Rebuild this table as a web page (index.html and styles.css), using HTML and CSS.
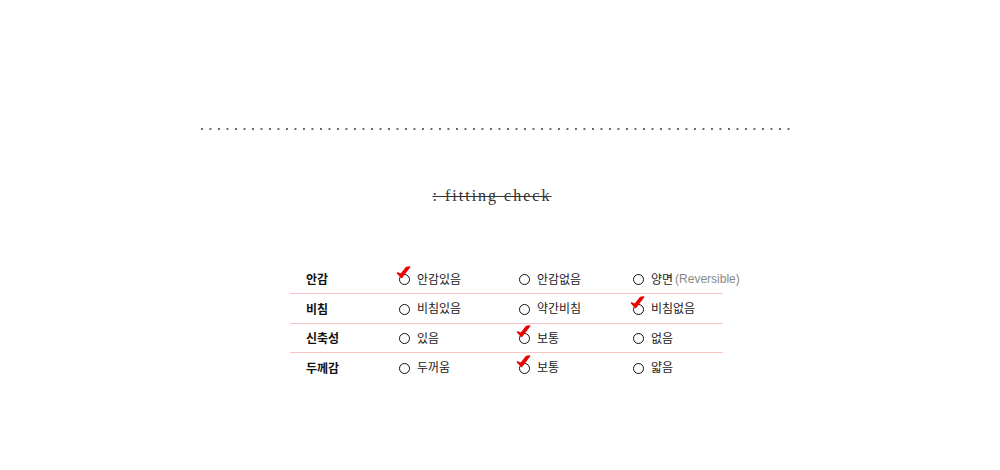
FILE: index.html
```html
<!DOCTYPE html>
<html lang="ko">
<head>
  <meta charset="UTF-8" />
  <title>fitting check</title>
  <link rel="stylesheet" href="styles.css">
</head>
<body>
  <div class="page">
    <div class="dots"></div>

    <h2 class="title">: fitting check</h2>

    <div class="fit">
      <div class="row">
        <div class="label">안감</div>
        <div class="opt"><span class="radio on"></span>안감있음</div>
        <div class="opt"><span class="radio"></span>안감없음</div>
        <div class="opt"><span class="radio"></span>양면 <em>(Reversible)</em></div>
      </div>
      <div class="row">
        <div class="label">비침</div>
        <div class="opt"><span class="radio"></span>비침있음</div>
        <div class="opt"><span class="radio"></span>약간비침</div>
        <div class="opt"><span class="radio on"></span>비침없음</div>
      </div>
      <div class="row">
        <div class="label">신축성</div>
        <div class="opt"><span class="radio"></span>있음</div>
        <div class="opt"><span class="radio on"></span>보통</div>
        <div class="opt"><span class="radio"></span>없음</div>
      </div>
      <div class="row">
        <div class="label">두께감</div>
        <div class="opt"><span class="radio"></span>두꺼움</div>
        <div class="opt"><span class="radio on"></span>보통</div>
        <div class="opt"><span class="radio"></span>얇음</div>
      </div>
    </div>
  </div>

  <script>
    // 체크 표시 그리기
    document.querySelectorAll('.radio.on').forEach(r => {
      r.innerHTML = '<svg class="tick" width="16" height="16" viewBox="0 0 16 16">' +
        '<path d="M1.5,8 L5.5,12.5 L13.5,2 L10.5,2.5 L5,9.5 Z" fill="#e00" stroke="#e00" stroke-width="1.6" stroke-linejoin="round"/>' +
        '</svg>';
    });
  </script>
</body>
</html>
```

FILE: styles.css
```css
body {
  margin: 0;
  background: #fff;
  color: #222;
  font-family: "Noto Sans CJK KR", "Noto Sans", sans-serif;
  font-size: 12px;
}

.page {
  width: 590px;
  margin-left: 201px;
  padding-top: 128px;
}

.dots {
  height: 2px;
  background-image: linear-gradient(to right, #666 2px, transparent 2px);
  background-size: 8.5px 2px;
}

.title {
  margin: 57px 0 0;
  text-align: center;
  font-family: "Liberation Serif", serif;
  font-weight: normal;
  font-size: 16px;
  line-height: 18px;
  letter-spacing: 2px;
  color: #333;
  text-decoration: line-through;
  padding-right: 8px;
}

.fit {
  width: 433px;
  margin: 60px 0 0 89px;
}

.row {
  display: grid;
  grid-template-columns: 109px 120px 114px 1fr;
  align-items: center;
  height: 29px;
  padding-bottom: 1px;
  box-sizing: border-box;
  border-bottom: 1px solid #f9c4c6;
  white-space: nowrap;
}

.row:nth-child(2) {
  height: 30px;
}

.row:last-child {
  border-bottom: none;
}

.label {
  padding-left: 16px;
  font-weight: bold;
  color: #111;
}

.opt {
  display: flex;
  align-items: center;
  line-height: 14px;
}

.opt em {
  font-style: normal;
  color: #888;
  font-family: "Liberation Sans", sans-serif;
  margin-left: 2px;
}

.radio {
  position: relative;
  width: 9px;
  height: 9px;
  border: 1px solid #111;
  border-radius: 50%;
  margin: 2px 7px 0 0;
}

.tick {
  position: absolute;
  left: -4px;
  top: -10px;
}
```
